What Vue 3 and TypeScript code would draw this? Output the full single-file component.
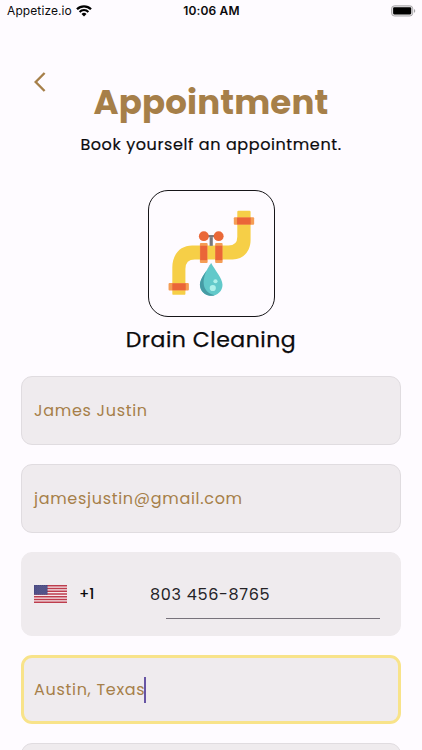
<script setup lang="ts">
import { ref } from 'vue'

const fullName = ref('James Justin')
const email = ref('jamesjustin@gmail.com')
const phone = ref('803 456-8765')
const address = ref('Austin, Texas')
const starRows = [0, 1, 2, 3, 4, 5, 6, 7, 8]
const starCols = [0, 1, 2, 3, 4, 5]
</script>

<template>
  <main class="screen">
    <header class="status">
      <div class="carrier">
        <span class="carrier-name">Appetize.io</span>
        <svg class="wifi" viewBox="0 0 16 12" aria-hidden="true">
          <path d="M1 4.300a9.900 9.900 0 0 1 14 0" fill="none" stroke="#000" stroke-width="2.300" />
          <path d="M3.600 6.900a6.200 6.200 0 0 1 8.800 0" fill="none" stroke="#000" stroke-width="2.100" />
          <path d="M8 11.400 5.500 8.900a3.600 3.600 0 0 1 5 0z" fill="#000" />
        </svg>
      </div>
      <span class="time">10:06 AM</span>
      <svg class="battery" viewBox="0 0 26 12" aria-hidden="true">
        <rect x="0.6" y="0.6" width="22" height="10.6" rx="3" fill="#e4e2e5" stroke="#a9a7aa" stroke-width="1" />
        <rect x="2.200" y="2.200" width="18.800" height="7.400" rx="1.200" fill="#000" />
        <path d="M24 4v4c1.600-.6 1.600-3.400 0-4z" fill="#a09ea1" />
      </svg>
    </header>

    <section class="intro">
      <button class="back" aria-label="Back">
        <svg viewBox="0 0 12 20" aria-hidden="true">
          <path d="M10.600 1 1.700 10l8.900 9" fill="none" stroke="#a67f49" stroke-width="2.400" />
        </svg>
      </button>
      <h1 class="title">Appointment</h1>
      <p class="subtitle">Book yourself an appointment.</p>
    </section>

    <section class="service">
      <div class="tile">
        <svg viewBox="0 0 126 126" aria-hidden="true">
          <g transform="translate(0 0.5)">
            <path d="M23.500 103V76.500C23.500 64 31 54.500 43.500 54.500H80q9 0 9-9V20.500q0-1.200 1.200-1.200h11q1.200 0 1.200 1.200V49c0 11-7 19.500-18 19.500H46.200q-9.500 0-9.500 9.500v25q0 1.200-1.200 1.200H24.700q-1.200 0-1.200-1.200z" fill="#f6cf47" />
            <path d="M62.700 46v8.800" stroke="#77777b" stroke-width="3.200" />
            <path d="M56 45h13" stroke="#77777b" stroke-width="2.200" />
            <circle cx="55.300" cy="45" r="5" fill="#ea6838" />
            <circle cx="70.200" cy="45" r="5" fill="#ea6838" />
            <g fill="#f59d55">
              <rect x="51.300" y="52" width="7.800" height="20" rx="1" />
              <rect x="66.700" y="52" width="7.500" height="20" rx="1" />
              <rect x="19.700" y="92.300" width="20.500" height="7.500" rx="1" />
              <rect x="85.500" y="26" width="20.500" height="7.500" rx="1" />
            </g>
            <g fill="#ea6538">
              <rect x="51.600" y="54.700" width="7" height="14.500" />
              <rect x="66.900" y="54.700" width="7" height="14.500" />
              <rect x="23.500" y="92.600" width="13.500" height="6.900" />
              <rect x="88.800" y="26.300" width="13.700" height="6.900" />
            </g>
            <path d="M62.700 72C59.200 79 51.300 87 51.300 94a11.400 11.200 0 0 0 22.800 0C74.100 87 66.200 79 62.700 72z" fill="#62c9ca" />
            <path d="M62.700 72C59.200 79 51.300 87 51.300 94a11.400 11.200 0 0 0 15 10.600C51.500 101 52.500 86 62.700 72z" fill="#469ba4" />
            <circle cx="64.300" cy="97.300" r="3.100" fill="#aef0ea" />
            <circle cx="67" cy="90.500" r="2.100" fill="#aef0ea" />
          </g>
        </svg>
      </div>
      <h2 class="service-name">Drain Cleaning</h2>
    </section>

    <form class="form">
      <div class="field"><span class="value name">{{ fullName }}</span></div>
      <div class="field"><span class="value email">{{ email }}</span></div>
      <div class="field phone">
        <svg class="flag" viewBox="0 0 33 18" preserveAspectRatio="none" aria-hidden="true">
          <rect width="33" height="18" fill="#f6e9ec" />
          <path d="M0 .7h33M0 3.460h33M0 6.230h33M0 9h33M0 11.770h33M0 14.540h33M0 17.300h33" stroke="#bd3d4d" stroke-width="1.385" />
          <rect width="13.500" height="9.700" fill="#46467f" />
          <g fill="#a5a5c6">
            <template v-for="r in starRows" :key="r">
              <circle v-for="c in starCols" :key="c" :cx="1.1 + c * 2.1 + (r % 2)" :cy="0.9 + r" r="0.3" />
            </template>
          </g>
        </svg>
        <span class="dial">+1</span>
        <div class="number">
          <span class="value digits">{{ phone }}</span>
          <span class="underline"></span>
        </div>
      </div>
      <div class="field focused"><span class="value address">{{ address }}</span><span class="caret"></span></div>
      <div class="field"></div>
    </form>
  </main>
</template>

<style>
body {
  background: #fefbff;
  overflow: hidden;
}
</style>

<style scoped>
* {
  box-sizing: border-box;
}
.screen {
  height: 750px;
  overflow: hidden;
  background: #fefbff;
  color: #0b0a0c;
  font-family: Poppins, Inter, sans-serif;
  display: flex;
  flex-direction: column;
  white-space: nowrap;
}
.status {
  flex: none;
  height: 22px;
  padding: 0 6px 0 7px;
  display: grid;
  grid-template-columns: 1fr auto 1fr;
  align-items: center;
  font-family: Inter, sans-serif;
  font-size: 12px;
  line-height: 22px;
}
.carrier {
  display: flex;
  align-items: center;
  gap: 4px;
}
.carrier-name {
  letter-spacing: 0.1px;
}
.wifi {
  width: 16px;
  height: 12px;
}
.time {
  font-weight: 600;
  letter-spacing: 0.15px;
}
.battery {
  justify-self: end;
  width: 25px;
  height: 12px;
}
.intro {
  flex: none;
  height: 168px;
  padding-top: 50px;
  display: grid;
  grid-template-columns: 60px 1fr 60px;
  grid-template-rows: 60px 26px;
}
.back {
  border: 0;
  padding: 0 0 0 34px;
  background: none;
  height: 21px;
  display: flex;
}
.back svg {
  width: 12px;
  height: 20px;
}
.title {
  margin: 0;
  padding-top: 9px;
  text-align: center;
  color: #a67f49;
  font-size: 34px;
  font-weight: 700;
  letter-spacing: 0.15px;
  line-height: 42px;
}
.subtitle {
  grid-column: 1 / -1;
  margin: 0;
  text-align: center;
  font-size: 16px;
  font-weight: 400;
  letter-spacing: 0.6px;
  line-height: 26px;
  -webkit-text-stroke: 0.2px #0b0a0c;
}
.service {
  flex: none;
  height: 186px;
  display: flex;
  flex-direction: column;
  align-items: center;
}
.tile {
  width: 127px;
  height: 127px;
  border: 1px solid #161518;
  border-radius: 20px;
}
.tile svg {
  display: block;
  width: 125px;
  height: 125px;
}
.service-name {
  margin: 7px 0 0;
  font-size: 22px;
  font-weight: 400;
  letter-spacing: 0.5px;
  line-height: 32px;
  -webkit-text-stroke: 0.25px #0b0a0c;
}
.form {
  flex: none;
  padding: 0 21px;
  display: flex;
  flex-direction: column;
  gap: 19px;
}
.field {
  height: 69px;
  padding: 0 12px;
  display: flex;
  align-items: center;
  border: 1px solid #e0dce0;
  border-radius: 11px;
  background: #efebee;
  color: #a67f49;
  font-size: 16px;
  letter-spacing: 0.7px;
  line-height: 24px;
}
.field.phone {
  height: 84px;
  border-color: #efebee;
  color: #242226;
}
.flag {
  width: 33px;
  height: 18px;
}
.dial {
  margin-left: 12px;
  width: 31px;
  color: #0b0a0c;
  font-size: 14.5px;
  font-weight: 500;
  letter-spacing: 0;
}
.number {
  margin-left: 40px;
  width: 231px;
  height: 50px;
  padding-top: 14px;
  display: flex;
  flex-direction: column;
}
.underline {
  margin: 11px 0 0 16px;
  width: 214px;
  height: 1px;
  flex: none;
  background: #77727b;
}
.field.focused {
  padding: 0 10px;
  border: 3px solid #f8e38a;
}
.caret {
  width: 2px;
  height: 26px;
  margin-left: -1px;
  background: #6754a4;
}
</style>
